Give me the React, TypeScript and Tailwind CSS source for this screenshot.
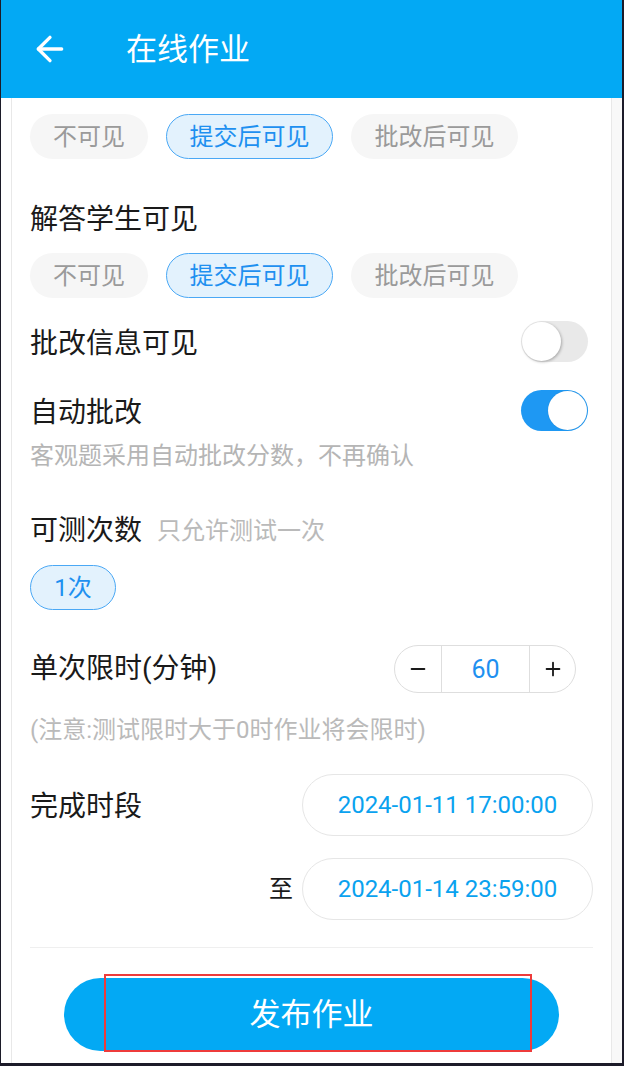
import React from "react";
import { ArrowLeft, Minus, Plus } from "lucide-react";

const FONT = { fontFamily: "Roboto, 'Noto Sans CJK SC', sans-serif" };

function Chip({ label, active, w }: { label: string; active?: boolean; w: string }) {
  return (
    <div
      className={
        "h-[45px] rounded-full flex items-center justify-center text-[24px] leading-none " +
        w +
        (active
          ? " bg-[#e3f2fd] border border-[#4aa8f5] text-[#1e90f0]"
          : " bg-[#f6f6f6] text-[#9a9a9a]")
      }
    >
      {label}
    </div>
  );
}

function Toggle({ on }: { on?: boolean }) {
  return (
    <div
      className={
        "mr-[5px] w-[67px] h-[41px] rounded-full flex items-center p-px " +
        (on ? "bg-[#1e98f3] justify-end" : "bg-[#e9e9e9] justify-start")
      }
    >
      <div
        className={
          "w-[39px] h-[39px] rounded-full bg-white " +
          (on ? "shadow-[0_0_1px_rgba(0,0,0,0.2)]" : "shadow-[1px_1px_3px_rgba(0,0,0,0.28)]")
        }
      />
    </div>
  );
}

export default function App() {
  return (
    <div className="w-[624px] h-[1066px] bg-[#1c1b29] pl-px pr-[2px] pb-[3px]" style={FONT}>
      <div className="h-full flex flex-col bg-white">
        <div className="h-[98px] shrink-0 bg-[#03a9f4] flex items-center pl-[29px]">
          <ArrowLeft size={40} strokeWidth={2} color="#ffffff" />
          <div className="ml-[56px] text-[31px] text-white leading-none">在线作业</div>
        </div>
        <div className="flex flex-1 min-h-0">
          <div className="w-[10px] bg-white" />
          <div className="flex-1 border-x border-[#e8e8e8] px-[18px] pt-4 overflow-hidden text-[#1a1a1a]">
            <div className="flex gap-[18px]">
              <Chip label="不可见" w="w-[118px]" />
              <Chip label="提交后可见" active w="w-[167px]" />
              <Chip label="批改后可见" w="w-[167px]" />
            </div>

            <div className="mt-[38px] h-[40px] leading-[40px] text-[28px] pt-[3px]">解答学生可见</div>

            <div className="mt-[16px] flex gap-[18px]">
              <Chip label="不可见" w="w-[118px]" />
              <Chip label="提交后可见" active w="w-[167px]" />
              <Chip label="批改后可见" w="w-[167px]" />
            </div>

            <div className="mt-[23px] flex items-center justify-between h-[41px]">
              <div className="text-[28px] leading-none pt-[4px]">批改信息可见</div>
              <Toggle />
            </div>

            <div className="mt-[28px] flex items-center justify-between h-[41px]">
              <div className="text-[28px] leading-none pt-[4px]">自动批改</div>
              <Toggle on />
            </div>

            <div className="mt-[9px] h-[32px] leading-[32px] text-[24px] text-[#b5b5b5]">
              客观题采用自动批改分数，不再确认
            </div>

            <div className="mt-[39px] h-[40px] flex items-center">
              <span className="text-[28px] leading-none">可测次数</span>
              <span className="ml-[15px] text-[24px] leading-none text-[#bababa]">只允许测试一次</span>
            </div>

            <div className="mt-[14px] flex">
              <Chip label="1次" active w="w-[86px]" />
            </div>

            <div className="mt-[35px] flex items-center justify-between h-[48px]">
              <div className="text-[28px] leading-none">单次限时(分钟)</div>
              <div className="mr-[17px] w-[182px] h-[48px] rounded-full border border-[#dedede] flex items-stretch">
                <div className="w-[46px] flex items-center justify-center text-[#1a1a1a]">
                  <Minus size={22} strokeWidth={2} />
                </div>
                <div className="w-[89px] border-x border-[#dedede] flex items-center justify-center text-[25px] text-[#1e90f0] leading-none">
                  60
                </div>
                <div className="flex-1 flex items-center justify-center text-[#1a1a1a]">
                  <Plus size={22} strokeWidth={2} />
                </div>
              </div>
            </div>

            <div className="mt-[21px] h-[32px] leading-[32px] text-[24px] text-[#bababa]">
              (注意:测试限时大于0时作业将会限时)
            </div>

            <div className="mt-[28px] flex items-center justify-between h-[62px]">
              <div className="text-[28px] leading-none pt-[4px]">完成时段</div>
              <div className="w-[291px] h-[62px] rounded-full border border-[#e6e6e6] flex items-center justify-center text-[24px] text-[#0aa2ef] leading-none">
                2024-01-11 17:00:00
              </div>
            </div>

            <div className="mt-[22px] flex items-center justify-end h-[62px]">
              <div className="text-[24px] leading-none mr-[9px]">至</div>
              <div className="w-[291px] h-[62px] rounded-full border border-[#e6e6e6] flex items-center justify-center text-[24px] text-[#0aa2ef] leading-none">
                2024-01-14 23:59:00
              </div>
            </div>

            <div className="mt-[27px] h-px bg-[#efefef]" />

            <div className="mt-[30px] mx-[34px] relative">
              <div className="h-[73px] rounded-full bg-[#03a9f4] flex items-center justify-center text-[31px] text-white leading-none">
                发布作业
              </div>
              <div className="absolute left-[40px] top-[-4px] w-[428px] h-[78px] border-2 border-[#ee3b3b]" />
            </div>
          </div>
          <div className="w-[10px] bg-[#f8f8f8]" />
        </div>
      </div>
    </div>
  );
}
